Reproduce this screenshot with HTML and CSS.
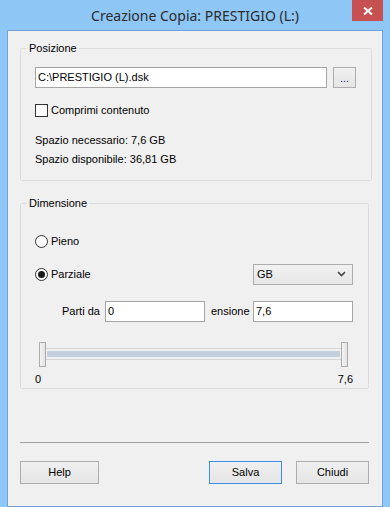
FILE: index.html
```html
<!DOCTYPE html>
<html lang="it">
<head>
    <meta charset="UTF-8">
    <meta name="viewport" content="width=device-width, initial-scale=1.0">
    <title>Creazione Copia</title>
    <link rel="stylesheet" href="styles.css">
</head>
<body>
    <div class="window">
        <div class="titlebar">
            <span class="title">Creazione Copia: PRESTIGIO (L:)</span>
            <button class="close" title="Chiudi">
                <svg width="10" height="8" viewBox="0 0 10 8">
                    <path d="M1 0.5 L9 7.5 M9 0.5 L1 7.5" stroke="#fff" stroke-width="2" fill="none"/>
                </svg>
            </button>
        </div>

        <div class="client">
            <fieldset class="group group-pos">
                <legend>Posizione</legend>
                <div class="path-row">
                    <input type="text" class="field path" value="C:\PRESTIGIO (L).dsk">
                    <button class="btn browse">...</button>
                </div>
                <label class="check">
                    <span class="box"></span>
                    Comprimi contenuto
                </label>
                <p class="info">Spazio necessario: 7,6 GB</p>
                <p class="info second">Spazio disponibile: 36,81 GB</p>
            </fieldset>

            <fieldset class="group group-dim">
                <legend>Dimensione</legend>
                <label class="radio">
                    <span class="dot"></span>
                    Pieno
                </label>
                <div class="partial-row">
                    <label class="radio">
                        <span class="dot checked"></span>
                        Parziale
                    </label>
                    <div class="select">
                        <span>GB</span>
                        <svg width="9" height="6" viewBox="0 0 9 6">
                            <path d="M1 1 L4.5 4.5 L8 1" stroke="#444" stroke-width="1.6" fill="none"/>
                        </svg>
                    </div>
                </div>
                <div class="range-row">
                    <span class="range-label from">Parti da</span>
                    <input type="text" class="field small" value="0">
                    <span class="range-label size">ensione</span>
                    <input type="text" class="field small" value="7,6">
                </div>
                <div class="slider">
                    <span class="handle"></span>
                    <span class="track"><span class="fill"></span></span>
                    <span class="handle"></span>
                </div>
                <div class="scale">
                    <span>0</span>
                    <span>7,6</span>
                </div>
            </fieldset>

            <div class="separator"></div>

            <div class="buttons">
                <button class="btn help">Help</button>
                <div class="right-buttons">
                    <button class="btn default">Salva</button>
                    <button class="btn">Chiudi</button>
                </div>
            </div>
        </div>
    </div>
</body>
</html>
```

FILE: styles.css
```css
body {
    margin: 0;
    background-color: #8ec6f5;
    font-family: Tahoma, "Liberation Sans", Arial, sans-serif;
    font-size: 11px;
    color: #000;
}
.window {
    width: 390px;
    height: 507px;
    display: flex;
    flex-direction: column;
}
.titlebar {
    height: 30px;
    display: grid;
    grid-template-columns: 1fr auto 1fr;
}
.titlebar .title {
    grid-column: 2;
    font-family: "Noto Sans", "Open Sans", sans-serif;
    font-size: 14px;
    line-height: 20px;
    padding-top: 6px;
    color: #2b2b2b;
    white-space: nowrap;
}
.close {
    grid-column: 3;
    justify-self: end;
    align-self: start;
    width: 31px;
    height: 21px;
    margin-right: 7px;
    padding: 0;
    border: none;
    background-color: #c75050;
    display: flex;
    align-items: center;
    justify-content: center;
}
.client {
    margin: 0 7px;
    height: 467px;
    border: 1px solid #6fa2d8;
    background-color: #f0f0f0;
    padding: 11px 13px 0 12px;
    display: flex;
    flex-direction: column;
}
.group {
    margin: 0;
    border: 1px solid #dcdcdc;
    border-radius: 2px;
    padding: 0 15px 0 14px;
}
.group legend {
    margin-left: -8px;
    padding: 0 2px;
    line-height: 13px;
}
.group-pos {
    padding-top: 12px;
    padding-bottom: 14px;
}
.path-row {
    display: flex;
    gap: 6px;
}
.field {
    box-sizing: border-box;
    height: 21px;
    border: 1px solid #a5a5a5;
    background-color: #fff;
    font-family: inherit;
    font-size: 11px;
    padding: 0 2px;
    margin: 0;
    color: #000;
}
.field.path {
    width: 292px;
}
.btn {
    box-sizing: border-box;
    height: 23px;
    border: 1px solid #acacac;
    background: linear-gradient(#f0f0f0, #e5e5e5);
    font-family: inherit;
    font-size: 11px;
    color: #000;
    padding: 0;
}
.btn.browse {
    width: 23px;
    height: 21px;
    line-height: 13px;
    padding-top: 3px;
    color: #1a1a6e;
}
.btn.default {
    border-color: #3c8ee6;
}
.check, .radio {
    display: flex;
    align-items: center;
    gap: 3px;
    line-height: 13px;
    white-space: nowrap;
}
.check {
    margin-top: 16px;
}
.box {
    width: 11px;
    height: 11px;
    border: 1px solid #333;
    background-color: #fff;
}
.info {
    margin: 17px 0 0;
    line-height: 13px;
}
.info.second {
    margin-top: 6px;
}
.group-dim {
    margin-top: 16px;
    padding-top: 25px;
    padding-bottom: 2px;
}
.dot {
    box-sizing: border-box;
    width: 13px;
    height: 13px;
    border: 1px solid #333;
    border-radius: 50%;
    background-color: #fff;
    display: flex;
    align-items: center;
    justify-content: center;
}
.dot.checked::after {
    content: "";
    width: 7px;
    height: 7px;
    border-radius: 50%;
    background-color: #1a1a1a;
}
.partial-row {
    margin-top: 16px;
    display: flex;
    justify-content: space-between;
    align-items: center;
}
.select {
    box-sizing: border-box;
    width: 100px;
    height: 21px;
    border: 1px solid #acacac;
    background: linear-gradient(#f2f2f2, #e6e6e6);
    display: flex;
    align-items: center;
    justify-content: space-between;
    padding: 0 6px 0 3px;
}
.range-row {
    margin-top: 16px;
    padding-left: 27px;
    display: flex;
    align-items: center;
    gap: 6px;
}
.range-label {
    white-space: nowrap;
    flex-shrink: 0;
}
.range-label.from {
    width: 37px;
}
.range-label.size {
    width: 36px;
}
.field.small {
    width: 100px;
    flex-shrink: 0;
}
.slider {
    margin: 20px 5px 0 4px;
    height: 25px;
    display: flex;
    align-items: center;
}
.handle {
    box-sizing: border-box;
    width: 7px;
    height: 25px;
    border: 1px solid #acacac;
    background: linear-gradient(90deg, #f3f3f3, #e3e3e3);
}
.track {
    flex: 1;
    box-sizing: border-box;
    height: 12px;
    border-top: 1px solid #d6d6d6;
    border-bottom: 1px solid #d6d6d6;
    padding: 2px 1px;
}
.fill {
    display: block;
    height: 6px;
    background-color: #c3cfdc;
}
.scale {
    margin-top: 6px;
    display: flex;
    justify-content: space-between;
    line-height: 13px;
}
.separator {
    margin-top: 53px;
    height: 1px;
    background-color: #a0a0a0;
}
.buttons {
    margin-top: 18px;
    display: flex;
    justify-content: space-between;
}
.btn.help {
    width: 79px;
}
.right-buttons {
    display: flex;
    gap: 14px;
}
.right-buttons .btn {
    width: 73px;
}
```
